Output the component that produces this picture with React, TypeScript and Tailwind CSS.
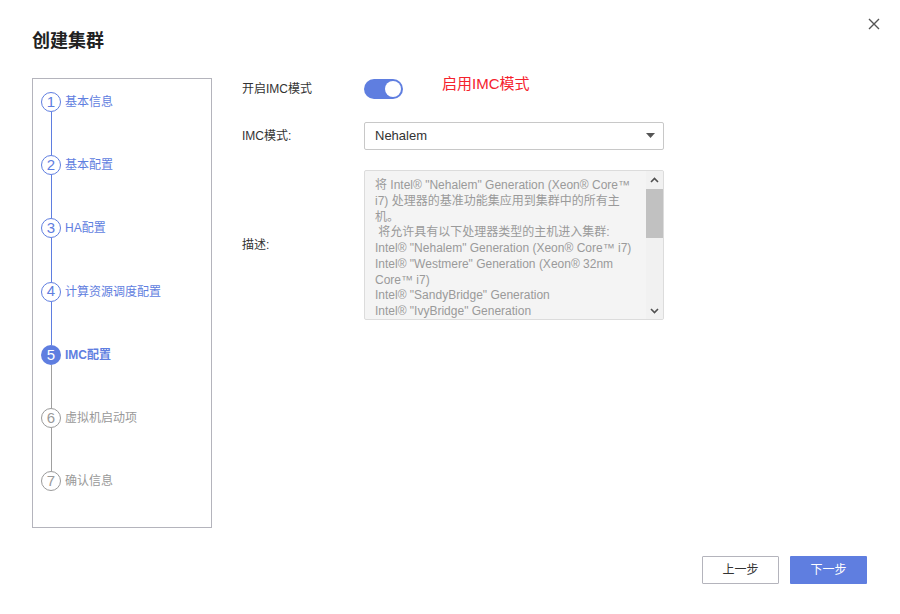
import React from "react";

const steps = [
  { n: 1, label: "基本信息", state: "done" },
  { n: 2, label: "基本配置", state: "done" },
  { n: 3, label: "HA配置", state: "done" },
  { n: 4, label: "计算资源调度配置", state: "done" },
  { n: 5, label: "IMC配置", state: "active" },
  { n: 6, label: "虚拟机启动项", state: "todo" },
  { n: 7, label: "确认信息", state: "todo" },
];

const desc = [
  "将 Intel® \"Nehalem\" Generation (Xeon® Core™",
  "i7) 处理器的基准功能集应用到集群中的所有主",
  "机。",
  " 将允许具有以下处理器类型的主机进入集群:",
  "Intel® \"Nehalem\" Generation (Xeon® Core™ i7)",
  "Intel® \"Westmere\" Generation (Xeon® 32nm",
  "Core™ i7)",
  "Intel® \"SandyBridge\" Generation",
  "Intel® \"IvyBridge\" Generation",
];

export default function App() {
  return (
    <div
      className="relative w-[900px] h-[614px] bg-white text-[#333]"
      style={{ fontFamily: '"Liberation Sans", "Noto Sans CJK SC", sans-serif' }}
    >
      <button className="absolute left-[866px] top-[16px] w-[16px] h-[16px] flex items-center justify-center">
        <svg width="12" height="12" viewBox="0 0 12 12">
          <path d="M1 1 L11 11 M11 1 L1 11" stroke="#555" strokeWidth="1.4" />
        </svg>
      </button>

      <div className="pt-[30px] pl-[32px] text-[18px] leading-[22px] font-bold text-[#222]">创建集群</div>

      <div className="flex mt-[26px] pl-[32px]">
        {/* Steps */}
        <div className="w-[180px] h-[450px] border border-[#b4b4bc] pl-[8px] pt-[13px]">
          {steps.map((s, i) => {
            const color =
              s.state === "todo" ? "text-[#999]" : "text-[#5f7ee0]";
            const lineBlue = s.n < 5;
            return (
              <div key={s.n} className="flex flex-col">
                <div className="flex items-center h-[20px]">
                  {s.state === "active" ? (
                    <div className="w-[20px] h-[20px] rounded-full bg-[#5f7ee0] text-white flex items-center justify-center text-[15px]">
                      {s.n}
                    </div>
                  ) : (
                    <div
                      className={`w-[20px] h-[20px] rounded-full border flex items-center justify-center text-[15px] ${
                        s.state === "todo" ? "border-[#9a9a9a] text-[#9a9a9a]" : "border-[#5f7ee0] text-[#5f7ee0]"
                      }`}
                    >
                      {s.n}
                    </div>
                  )}
                  <span
                    className={`ml-[4px] text-[12px] ${color} ${s.state === "active" ? "font-bold" : ""}`}
                  >
                    {s.label}
                  </span>
                </div>
                {i < steps.length - 1 && (
                  <div className="w-[20px] flex justify-center h-[43.2px]">
                    <div className={`w-px h-full ${lineBlue ? "bg-[#5f7ee0]" : "bg-[#a0a0a0]"}`} />
                  </div>
                )}
              </div>
            );
          })}
        </div>

        {/* Form */}
        <div className="ml-[30px] text-[12px]">
          <div className="flex items-center h-[24px] mt-[-1px]">
            <div className="w-[122px] text-[#333]">开启IMC模式</div>
            <div className="w-[39px] h-[20px] rounded-full bg-[#5f7ee0] flex items-center justify-end pr-[2px]">
              <div className="w-[16px] h-[16px] rounded-full bg-white" />
            </div>
            <div className="ml-[39px] mt-[-9px] text-[15px] text-[#f5222d]">启用IMC模式</div>
          </div>

          <div className="flex items-center mt-[21px]">
            <div className="w-[122px] text-[#333]">IMC模式:</div>
            <div className="w-[300px] h-[28px] border border-[#c8c8c8] rounded-[2px] flex items-center justify-between pl-[10px] pr-[8px] text-[13px] text-[#333]">
              <span>Nehalem</span>
              <svg width="9" height="6" viewBox="0 0 9 6">
                <path d="M0 0 L9 0 L4.5 5 Z" fill="#555" />
              </svg>
            </div>
          </div>

          <div className="flex items-center mt-[20px]">
            <div className="w-[122px] text-[#333]">描述:</div>
            <div className="relative w-[300px] h-[150px] border border-[#dcdcdc] bg-[#f4f4f4] overflow-hidden rounded-[2px]">
              <div className="pl-[10px] pt-[7px] text-[12px] leading-[15.75px] text-[#9a9a9a] whitespace-pre">
                {desc.map((l, i) => (
                  <div key={i}>{l}</div>
                ))}
              </div>
              <div className="absolute right-0 top-0 w-[17px] h-full bg-[#f1f1f1] flex flex-col items-center">
                <div className="h-[17px] flex items-center justify-center">
                  <svg width="9" height="6" viewBox="0 0 9 6">
                    <path d="M1 5 L4.5 1.5 L8 5" stroke="#505050" strokeWidth="1.6" fill="none" />
                  </svg>
                </div>
                <div className="w-full h-[49px] bg-[#c1c1c1] mt-[1px]" />
                <div className="flex-1" />
                <div className="h-[17px] flex items-center justify-center">
                  <svg width="9" height="6" viewBox="0 0 9 6">
                    <path d="M1 1 L4.5 4.5 L8 1" stroke="#505050" strokeWidth="1.6" fill="none" />
                  </svg>
                </div>
              </div>
            </div>
          </div>
        </div>
      </div>

      <div className="flex justify-end gap-[11px] pr-[33px] mt-[28px]">
        <button className="w-[77px] h-[28px] border border-[#b4b4bc] bg-white text-[12px] text-[#333] rounded-[1px]">
          上一步
        </button>
        <button className="w-[77px] h-[28px] bg-[#5f7ee0] text-white text-[12px] rounded-[1px]">
          下一步
        </button>
      </div>
    </div>
  );
}
